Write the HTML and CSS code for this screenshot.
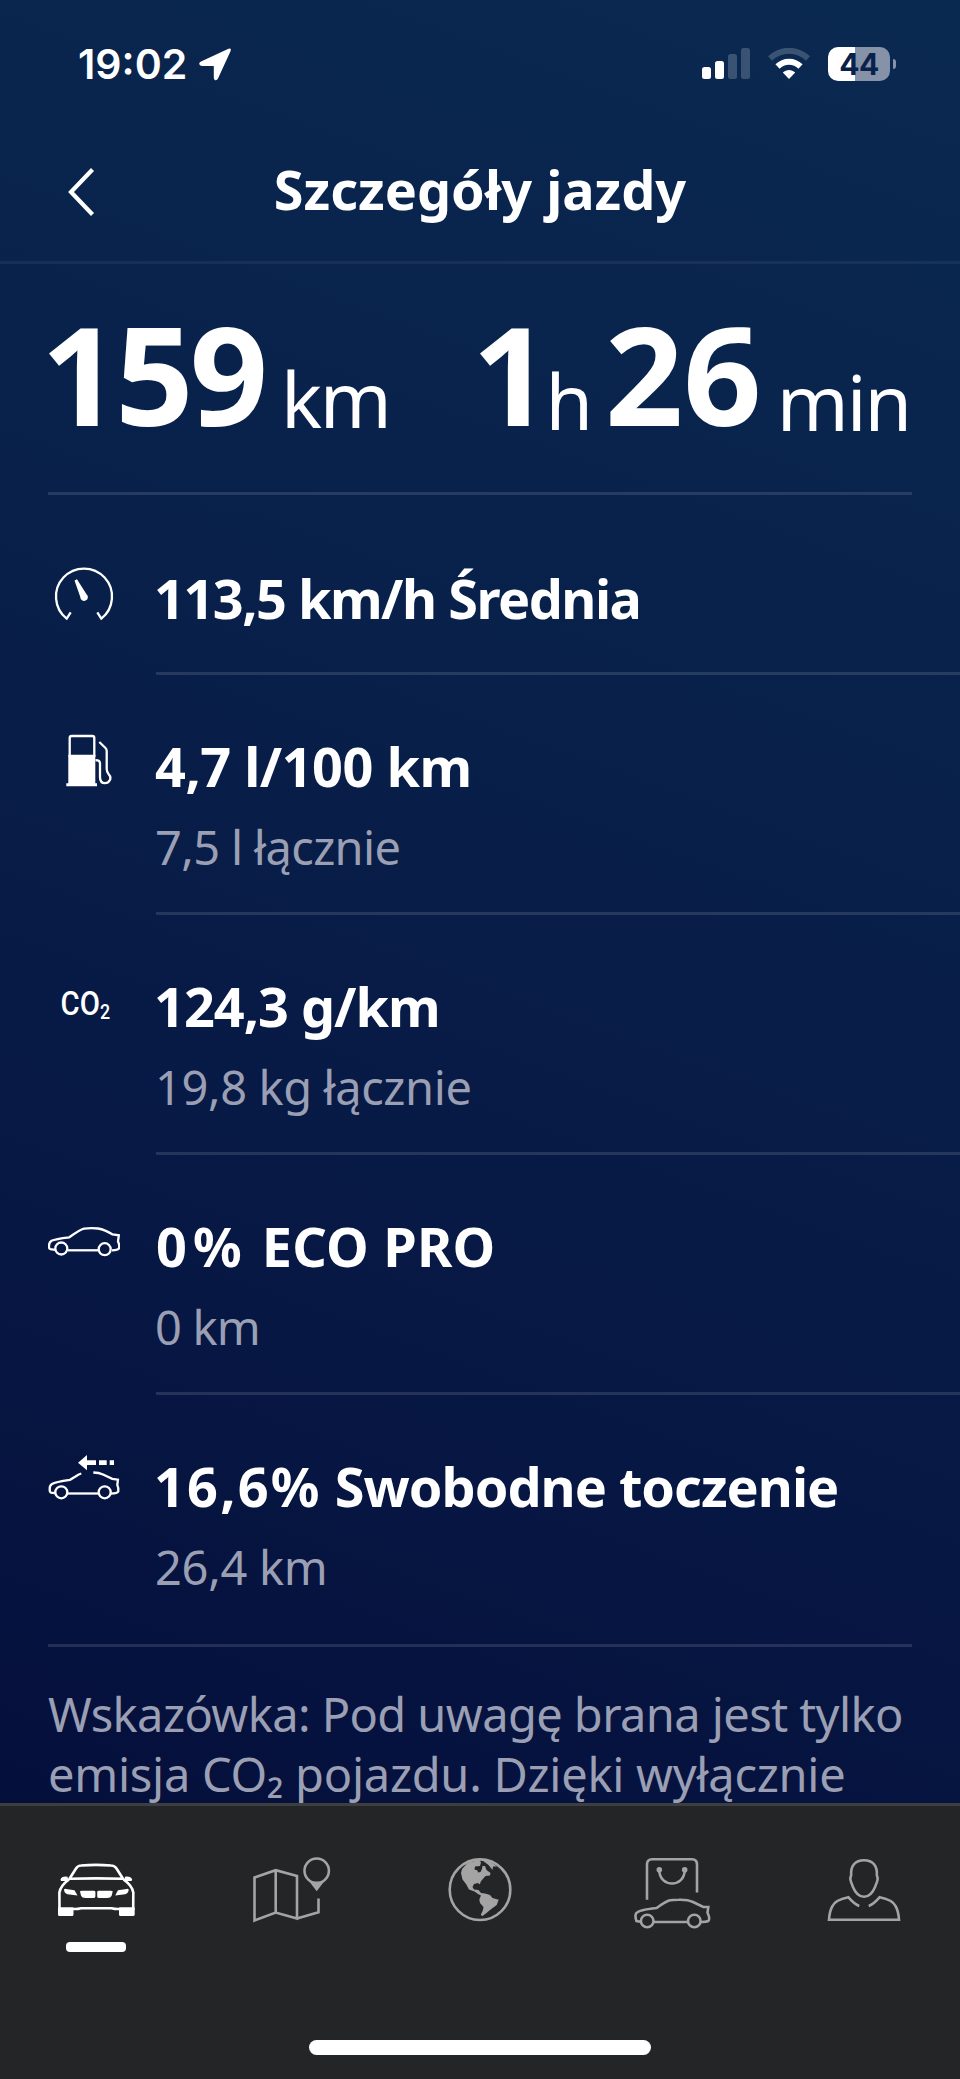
FILE: index.html
```html
<!DOCTYPE html>
<html lang="pl">
  <head>
    <meta charset="UTF-8" />
    <meta name="viewport" content="width=device-width, initial-scale=1.0" />
    <title>Szczegóły jazdy</title>
    <link rel="stylesheet" href="styles.css">
  </head>
  <body>
    <div class="status-bar">
      <span class="time">19:02</span>
      <svg class="location" width="34" height="34" viewBox="0 0 34 34">
        <path d="M3 14.5 30.5 1.8Q33.8.8 32.5 4.2L20 31.5Q18.7 33.8 16.8 32.9 15.8 32.3 15.8 30.5V19H4Q1.2 18.6 1.2 16.7 1.2 15.3 3 14.5Z" fill="#fff"/>
      </svg>
      <div class="status-icons">
        <svg width="48" height="32" viewBox="0 0 48 32" fill="#fff">
          <rect x="0" y="19" width="9" height="12" rx="2.5"/>
          <rect x="13" y="13" width="9" height="18" rx="2.5"/>
          <rect x="26" y="6" width="9" height="25" rx="2.5" opacity=".2"/>
          <rect x="39" y="0" width="9" height="31" rx="2.5" opacity=".2"/>
        </svg>
        <svg width="42" height="32" viewBox="0 0 42 32" fill="none" stroke="#fff">
          <path d="M2 10.5C13 .2 29 .2 40 10.5" stroke-width="6" opacity=".2"/>
          <path d="M9.5 18.5C16 12.2 26 12.2 32.5 18.5" stroke-width="6"/>
          <path d="M21 31 14.8 24.5C18.5 21 23.5 21 27.2 24.5Z" fill="#fff" stroke="none"/>
        </svg>
        <div class="battery"><span>44</span></div>
      </div>
    </div>

    <header class="header">
      <svg class="back" width="28" height="50" viewBox="0 0 28 50">
        <path d="M24.5 2.5 3 25 24.5 47.5" fill="none" stroke="#fff" stroke-width="4.2"/>
      </svg>
      <h1>Szczegóły jazdy</h1>
    </header>

    <main class="content">
      <section class="stats">
        <div><b class="distance">159</b><span class="unit km">km</span></div>
        <div><b class="hour-count">1</b><span class="unit hours">h</span><b>26</b><span class="unit min">min</span></div>
      </section>

      <section class="rows">
        <div class="row single">
          <svg class="icon" viewBox="0 0 72 72">
            <path d="M22.7 51.3 18.7 57.6A28 28 0 1 1 53.3 57.6L49.3 51.3"/>
            <path class="solid" d="M26.5 19.5 29 18.3 38.5 33.2A3.8 3.8 0 1 1 32.3 36Z"/>
          </svg>
          <div class="text">
            <h2 class="avg">113,5 km/h Średnia</h2>
          </div>
        </div>
        <div class="row">
          <svg class="icon" viewBox="0 0 72 72">
            <path d="M21.7 28V9Q21.7 7 23.7 7H44.3Q46.3 7 46.3 9V28"/>
            <path class="solid" d="M20.3 25.7H47.3V54.3H49V57.2H18.3V54.3H20.3Z"/>
            <path d="M51.3 13 57.5 19Q58.7 20.2 58.7 22V40Q58.7 43 60.7 45.3C64.5 49.3 61 54.2 57 54.2 53.5 54.2 52 51.5 52 48V34.5Q52 31.2 47.5 31.2"/>
          </svg>
          <div class="text">
            <h2 class="fuel">4,7 l/100 km</h2>
            <p class="fuel-total">7,5 l łącznie</p>
          </div>
        </div>
        <div class="row">
          <svg class="icon co2" viewBox="0 0 72 72">
            <text x="12.5" y="46" textLength="49.5" lengthAdjust="spacingAndGlyphs">CO<tspan class="sub" dy="4">2</tspan></text>
          </svg>
          <div class="text">
            <h2 class="co2-avg">124,3 g/km</h2>
            <p class="co2-total">19,8 kg łącznie</p>
          </div>
        </div>
        <div class="row">
          <svg class="icon" viewBox="0 0 72 72">
            <path d="M7 40.8 2.5 40.2Q.8 39.8 1 37.5 .8 33.5 3.5 31.8 7 30 21.3 28.3 32 20.5 36 19.6 43 18.7 50 19.5 57 20.7 64.7 25.5L70.8 26.3 70 32.5Q71.8 36 71 39.3 70 41 64 41.3"/>
            <path d="M20 41.3H50"/>
            <circle cx="13.3" cy="39.5" r="6"/>
            <circle cx="56.7" cy="40.2" r="6"/>
          </svg>
          <div class="text">
            <h2 class="eco"><span class="percent">0%</span> ECO PRO</h2>
            <p class="eco-total">0 km</p>
          </div>
        </div>
        <div class="row last">
          <svg class="icon" viewBox="0 0 72 72">
            <path d="M7 44.2 3 43.6Q1.5 43 1.7 40 1.5 36.5 4 35 7 33 22 30.8L27.5 27.5Q31 25 33.3 24.5"/>
            <path d="M45.3 23.5Q51 23.5 55 25.5L64.3 29.9 69.9 30.7 69.3 36Q70.8 39 70.3 42.5 69.5 44.3 63 44.5"/>
            <path d="M20 44.5H50"/>
            <circle cx="13.3" cy="43.3" r="6"/>
            <circle cx="56.7" cy="43.3" r="6"/>
            <path class="solid" d="M30 13.7 39 6V11.3H48V16H39V21.3ZM51 11.3H58.7V16H51ZM61.7 11.3H66V16H61.7Z"/>
          </svg>
          <div class="text">
            <h2 class="coasting"><span class="percent">16,6%</span> Swobodne toczenie</h2>
            <p class="coasting-total">26,4 km</p>
          </div>
        </div>
      </section>

      <p class="note"><span class="line-one">Wskazówka: Pod uwagę brana jest tylko</span><br><span class="line-two">emisja CO₂ pojazdu. Dzięki wyłącznie</span></p>
    </main>

    <nav class="tab-bar">
      <a class="tab active">
        <svg viewBox="0 0 96 84">
          <path d="M21.5 28.7 28 18.5Q30 15.5 33 15.5 48 14.2 63 15.5 66.5 15.5 68.5 18.5L75 28.7Q48 28.1 21.5 28.7ZM21 29.5Q12.5 35.5 11.4 42.5L11.5 60M75.5 29.5Q84.2 35.5 85.3 42.5L85.2 60M12 58.7H24Q28 59.5 33 58.2H63.5Q69 59.5 73 58.7H85"/>
          <path class="solid" d="M12.5 29.5Q13.5 26 19.5 26.7L20.5 31H13ZM84.2 29.5Q83 26 77 26.7L76 31H83.5ZM16 39.5Q16.5 38.7 18 38.9L26.5 40.2 29.5 45.5 19.5 44.2Q16 43 16 39.5ZM80.7 39.5Q80 38.7 78.7 38.9L70 40.2 67.2 45.5 77.2 44.2Q80.7 43 80.7 39.5ZM32 41.5Q32 40.7 34 40.7H45.5Q47.4 40.7 47.4 42V46.5Q47.2 48 45.5 48H37.5Q34 48 33 45.5ZM64.7 41.5Q64.7 40.7 62.7 40.7H51Q49.2 40.7 49.2 42V46.5Q49.4 48 51 48H59Q62.7 48 63.7 45.5ZM10 57.5H25.5V64.5Q25.5 66 24 66H11.5Q10 66 10 64.5ZM71 57.5H86.7V64.5Q86.7 66 85 66H72.5Q71 66 71 64.5Z"/>
        </svg>
      </a>
      <a class="tab">
        <svg viewBox="0 0 96 84">
          <path d="M14.5 27.5 35.7 20.2 57 26V68.5L35.7 62.5 14.5 70.5ZM35.7 20.2V62.5M57 68.5 78.5 62.3V48.5"/>
          <circle cx="76.7" cy="20.7" r="12.2"/>
          <path class="solid" d="M65.5 26.5Q70 32 76.7 32T88 26.5L76.7 41.2Z"/>
        </svg>
      </a>
      <a class="tab">
        <svg viewBox="0 0 96 84">
          <circle cx="48" cy="39.7" r="30.3"/>
          <path class="solid" d="M30 19 36 12.5 47.5 10 49 12.5 48 16 43 16.5 42.5 19.5 45.5 20.5 46 22.5 48.5 22 50 19 50.5 16 53 16 54.5 20 58.5 23 58 25.5 53.5 26 50 30 48.5 32 48 34.5 46 33 42 34 40.5 37 42 39.5 46.5 40 49 43 53 43.5 58 45 60.5 48 66.7 49.7 64.7 55 58 60 54.5 63 50.5 66 48.7 65 51 60 51.5 57 48 53 47.3 49.5 49 45.5 46 44 42.5 41.5 37 39.5 34 34 30.5 29.5 29 23ZM50.5 10.5 58 11.5 65 16.5 61 16.5 60.5 20 56.5 15Z"/>
        </svg>
      </a>
      <a class="tab">
        <svg viewBox="0 0 96 84">
          <path d="M23 49.7V14.5Q23 9.3 28 9.3H68Q73 9.3 73 14.5V42.5M35.3 20C35.3 38 60.7 38 60.7 20"/>
          <path d="M16.7 71.8 12.5 71Q10.7 66 12 63.5 14 60 32.7 58 40 52.5 45 50.5 48 49.7 55 49.7 64 49.5 69 52L79.3 57H84.3L83.5 62.7Q86.5 69 84.3 71 82 72 76.5 72M29.5 72H63.5"/>
          <circle cx="23.2" cy="71" r="6.3"/>
          <circle cx="70.3" cy="71" r="6.3"/>
          <circle class="solid" cx="35.3" cy="19.7" r="2.8"/>
          <circle class="solid" cx="60.7" cy="19.7" r="2.8"/>
        </svg>
      </a>
      <a class="tab">
        <svg viewBox="0 0 96 84">
          <path d="M48 10.3C39 10.3 34.5 16 35.2 25L34.3 28.5C34.5 32 36 33.5 36.7 36.5 40 44.5 44 46.8 48 46.8S56 44.5 59.3 36.5C60 33.5 61.5 32 61.7 28.5L60.8 25C61.5 16 57 10.3 48 10.3Z"/>
          <path d="M43.3 56Q38.5 54.5 32.3 47.2 19 50 16.5 56 13.5 61 13 69.7H83Q82.5 61 79.5 56 77 50 63.7 47.2 57.5 54.5 52.7 56"/>
        </svg>
      </a>
      <div class="home-indicator"></div>
    </nav>
  </body>
</html>
```

FILE: styles.css
```css
* {
  box-sizing: border-box;
}

body {
  margin: 0;
  height: 2079px;
  overflow: hidden;
  display: flex;
  flex-direction: column;
  font-family: "Noto Sans", sans-serif;
  color: #fff;
  background: linear-gradient(200deg, #0a2951 0%, #08204a 35%, #071743 65%, #050f3c 88%);
}

h1,
h2,
p {
  margin: 0;
  white-space: nowrap;
}

/* Status bar */
.status-bar {
  height: 96px;
  padding: 32px 70px 0 78px;
  display: flex;
  align-items: center;
  flex: none;
}

.time {
  font-family: Inter, sans-serif;
  font-size: 41px;
  font-weight: 600;
  line-height: 64px;
}

.location {
  margin-left: 11px;
}

.status-icons {
  display: flex;
  align-items: center;
  gap: 18px;
  margin-left: auto;
}

.battery {
  position: relative;
  width: 62px;
  height: 34px;
  border-radius: 10px;
  background: linear-gradient(90deg, #fff 27px, #8592a8 27px);
  color: #08224c;
  font: 700 30px/34px Inter, sans-serif;
  letter-spacing: -0.5px;
  text-align: center;
}

.battery::after {
  content: "";
  position: absolute;
  right: -6px;
  top: 12px;
  width: 3px;
  height: 10px;
  border-radius: 0 4px 4px 0;
  background: #8592a8;
}

/* Header */
.header {
  height: 168px;
  border-bottom: 3px solid rgba(255, 255, 255, 0.06);
  display: grid;
  grid-template-columns: 160px 1fr 160px;
  flex: none;
}

.back {
  margin: 71px 0 0 68px;
}

.header h1 {
  padding-top: 57px;
  font-size: 54px;
  line-height: 72px;
  text-align: center;
}

/* Content */
.content {
  height: 1539px;
  overflow: hidden;
  flex: none;
}

.stats {
  height: 231px;
  margin: 0 48px;
  border-bottom: 3px solid rgba(255, 255, 255, 0.12);
  display: grid;
  grid-template-columns: 432px 1fr;
  white-space: nowrap;
}

.stats b {
  font-size: 137px;
  line-height: 218px;
}

.stats .distance {
  margin-left: -7px;
  letter-spacing: -4px;
}

.stats .hour-count {
  margin-left: -8px;
  letter-spacing: -5px;
}

.unit {
  font-size: 77px;
  line-height: 1;
}

.unit.km {
  margin-left: 17px;
  letter-spacing: -2.5px;
  vertical-align: -2px;
}

.unit.hours {
  margin-right: 12px;
  vertical-align: -4px;
}

.unit.min {
  margin-left: 15px;
  letter-spacing: -2px;
  vertical-align: -5px;
}

.row {
  display: flex;
  height: 240px;
  padding: 54px 0 0 48px;
}

.row.single {
  height: 180px;
  padding-top: 66px;
}

.icon {
  width: 72px;
  height: 72px;
  margin-right: 36px;
  fill: none;
  stroke: #fff;
  stroke-width: 2.3;
  flex: none;
}

.icon .solid,
.icon text {
  fill: #fff;
  stroke: none;
}

.co2 text {
  font-family: Roboto, sans-serif;
  font-size: 33px;
  font-weight: 500;
}

.co2 .sub {
  font-size: 20px;
}

.text {
  flex: 1;
  margin-top: -54px;
  padding-top: 55px;
  border-bottom: 3px solid rgba(255, 255, 255, 0.12);
}

.single .text {
  margin-top: 0;
  padding-top: 1px;
}

.text h2 {
  font-size: 54px;
  line-height: 72px;
}

.text p {
  margin: 15px 0 0 -1px;
  font-size: 47px;
  line-height: 60px;
  color: #9b9fb3;
}

/* Tracking per line */
.text .avg {
  margin-left: -2px;
  letter-spacing: -1.5px;
}

.text .fuel {
  margin-left: -1px;
  letter-spacing: -0.5px;
}

.fuel-total {
  letter-spacing: -0.65px;
}

.text .co2-avg {
  margin-left: -2px;
  letter-spacing: -1px;
}

.co2-total {
  letter-spacing: -0.4px;
}

.eco {
  letter-spacing: 0.2px;
}

.eco .percent {
  letter-spacing: 6px;
}

.eco-total {
  letter-spacing: -0.8px;
}

.text .coasting {
  margin-left: -2px;
  letter-spacing: -1px;
}

.coasting .percent {
  letter-spacing: 2.2px;
}

.coasting-total {
  letter-spacing: -0.3px;
}

.row.last {
  height: 252px;
  margin: 0 48px;
  padding-left: 0;
  border-bottom: 3px solid rgba(255, 255, 255, 0.12);
}

.last .text {
  border-bottom: none;
}

.note {
  padding: 37px 0 0 48px;
  font-size: 47px;
  line-height: 60px;
  color: #9b9fb3;
}

.line-one {
  letter-spacing: -0.58px;
}

.line-two {
  letter-spacing: -0.26px;
}

/* Tab bar */
.tab-bar {
  height: 276px;
  border-top: 3px solid #3d3e40;
  background: #242527;
  display: grid;
  grid-template-columns: repeat(5, 1fr);
  grid-template-rows: 234px 15px;
  flex: none;
}

.tab {
  padding-top: 44px;
  display: flex;
  flex-direction: column;
  align-items: center;
}

.tab svg {
  width: 96px;
  height: 84px;
  fill: none;
  stroke: #a3a4a3;
  stroke-width: 2.6;
}

.tab .solid {
  fill: #a3a4a3;
  stroke: none;
}

.tab.active svg {
  stroke: #fff;
}

.tab.active .solid {
  fill: #fff;
}

.tab.active::after {
  content: "";
  width: 60px;
  height: 10px;
  margin-top: 8px;
  border-radius: 4px;
  background: #fff;
}

.home-indicator {
  grid-column: 1 / -1;
  justify-self: center;
  width: 342px;
  height: 15px;
  border-radius: 8px;
  background: #fff;
}
```
